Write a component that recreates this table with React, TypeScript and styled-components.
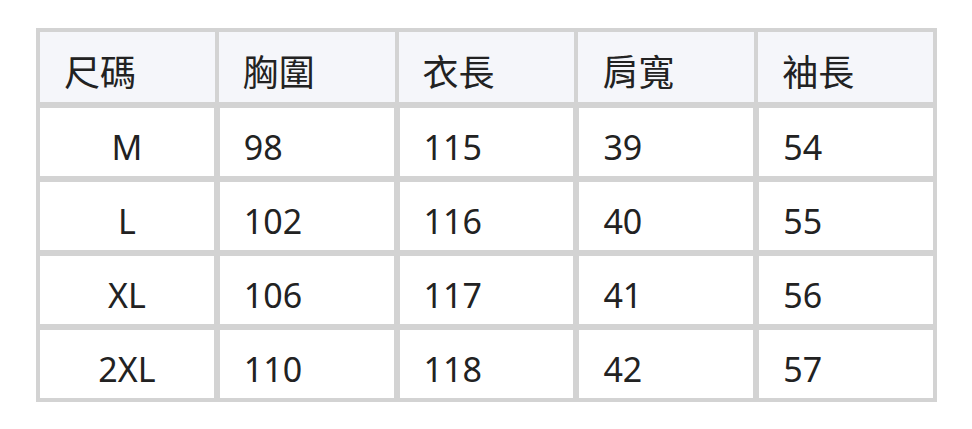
import styled, { createGlobalStyle } from "styled-components";

const GlobalStyle = createGlobalStyle`
  body {
    margin: 0;
    background: #ffffff;
    font-family: "Noto Sans", "Noto Sans CJK TC", sans-serif;
  }
`;

const Page = styled.div`
  padding: 28px 35px 0 36px;
`;

const Table = styled.div`
  display: grid;
  grid-template-columns: repeat(5, 1fr);
  grid-template-rows: 74px repeat(4, 72px);
  gap: 2px;
  padding: 2px;
  background: #d3d3d3;
  width: 901px;
  box-sizing: border-box;
`;

const Cell = styled.div<{ $head?: boolean; $center?: boolean; $first?: boolean; $last?: boolean }>`
  display: flex;
  align-items: center;
  justify-content: ${(p) => (p.$center ? "center" : "flex-start")};
  box-sizing: border-box;
  padding: ${(p) => (p.$head ? "12px" : "10px")} 24px 0 24px;
  border: 2px solid #d3d3d3;
  border-left-width: ${(p) => (p.$head && !p.$first ? "1px" : "2px")};
  border-right-width: ${(p) => (p.$head && !p.$last ? "1px" : "2px")};
  background: ${(p) => (p.$head ? "#f5f6fa" : "#ffffff")};
  color: #222222;
  font-size: ${(p) => (p.$head ? "36px" : "34px")};
  line-height: 1.2;
  white-space: nowrap;
`;

const headers = ["尺碼", "胸圍", "衣長", "肩寬", "袖長"];
const rows = [
  ["M", "98", "115", "39", "54"],
  ["L", "102", "116", "40", "55"],
  ["XL", "106", "117", "41", "56"],
  ["2XL", "110", "118", "42", "57"],
];

export default function App() {
  return (
    <>
      <GlobalStyle />
      <Page>
        <Table>
          {headers.map((h, i) => (
            <Cell key={h} $head $first={i === 0} $last={i === headers.length - 1}>
              {h}
            </Cell>
          ))}
          {rows.map((r) =>
            r.map((v, i) => (
              <Cell key={r[0] + i} $center={i === 0}>
                {v}
              </Cell>
            ))
          )}
        </Table>
      </Page>
    </>
  );
}
